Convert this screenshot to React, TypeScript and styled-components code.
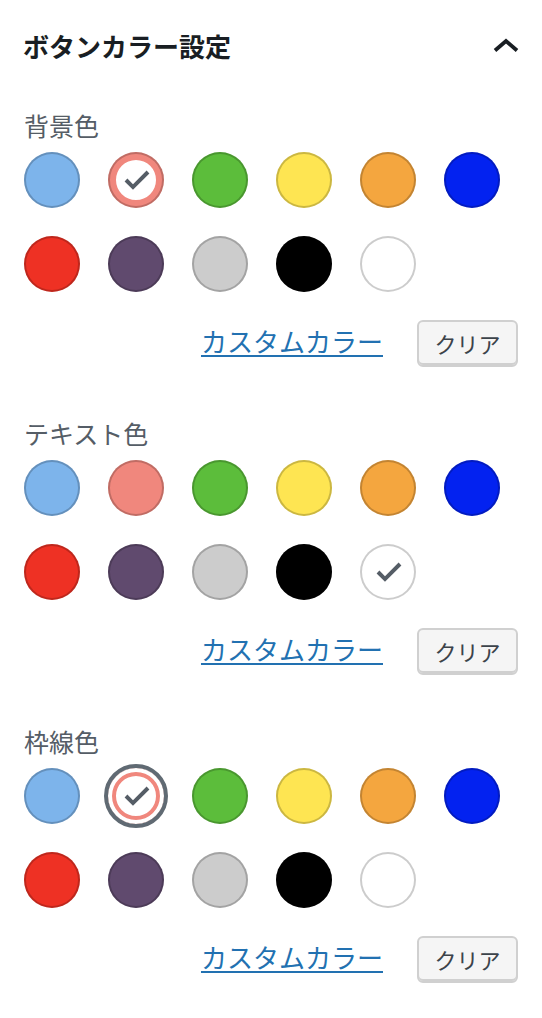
import React from "react";
import styled, { createGlobalStyle, css } from "styled-components";

const GlobalStyle = createGlobalStyle`
  html, body {
    margin: 0;
    padding: 0;
    background: #ffffff;
  }
  body {
    font-family: "Noto Sans CJK JP", "Noto Sans", sans-serif;
  }
`;

const Panel = styled.div`
  width: 542px;
  box-sizing: border-box;
  background: #fff;
  padding-bottom: 40px;
`;

const Header = styled.div`
  display: flex;
  align-items: center;
  justify-content: space-between;
  height: 92px;
  padding: 0 12px 0 23px;
`;

const Title = styled.h2`
  margin: 0;
  font-size: 26px;
  font-weight: 700;
  color: #191e23;
  line-height: 1;
`;

const Chevron = styled.svg`
  width: 48px;
  height: 48px;
  display: block;
`;

const Sections = styled.div`
  display: flex;
  flex-direction: column;
  gap: 49px;
  padding: 16px 24px 0 24px;
`;

const Section = styled.section`
  display: flex;
  flex-direction: column;
`;

const Label = styled.div`
  font-size: 25px;
  line-height: 34px;
  color: #555d66;
  margin-bottom: 10px;
`;

const Swatches = styled.div`
  display: flex;
  flex-wrap: wrap;
  gap: 28px;
`;

const Swatch = styled.button<{ $color: string; $selected?: boolean; $focused?: boolean }>`
  position: relative;
  width: 56px;
  height: 56px;
  padding: 0;
  border: none;
  border-radius: 50%;
  background: transparent;
  cursor: pointer;
  display: flex;
  align-items: center;
  justify-content: center;
  box-shadow: inset 0 0 0 ${(p) => (p.$selected ? "8px" : "28px")} ${(p) => p.$color};
  outline: none;

  &::before {
    content: "";
    position: absolute;
    inset: 0;
    border-radius: 50%;
    box-shadow: inset 0 0 0 2px rgba(0, 0, 0, 0.2);
  }

  ${(p) =>
    p.$focused &&
    css`
      &::after {
        content: "";
        position: absolute;
        top: -4px;
        left: -4px;
        width: 64px;
        height: 64px;
        box-sizing: border-box;
        border-radius: 50%;
        border: 4px solid #606a73;
        box-shadow: inset 0 0 0 4px #fff;
      }
    `}
`;

const Check = styled.svg`
  width: 40px;
  height: 40px;
  display: block;
  position: relative;
  z-index: 1;
`;

const Actions = styled.div`
  display: flex;
  justify-content: flex-end;
  align-items: center;
  gap: 34px;
  margin-top: 28px;
`;

const CustomLink = styled.a`
  font-size: 26px;
  line-height: 1.3;
  padding-bottom: 5px;
  color: #2271b1;
  text-decoration: underline;
  text-decoration-thickness: 2px;
  text-underline-offset: 3px;
  cursor: pointer;
`;

const ClearButton = styled.button`
  height: 47px;
  width: 101px;
  box-sizing: border-box;
  padding: 0 12px 2px;
  font-family: "Noto Sans CJK JP", "Noto Sans", sans-serif;
  font-size: 22px;
  color: #3c434a;
  background: #f5f5f5;
  border: 2px solid #d0d0d0;
  border-radius: 6px;
  box-shadow: inset 0 -2px 0 #d0d0d0;
  cursor: pointer;
`;

const COLORS = [
  "#7db4eb",
  "#f0877d",
  "#5cbd3b",
  "#fee552",
  "#f4a63f",
  "#0322f0",
  "#ee3124",
  "#604a6e",
  "#cccccc",
  "#000000",
  "#ffffff",
];

type SectionData = { label: string; selected: number; focused?: boolean };

const SECTIONS: SectionData[] = [
  { label: "背景色", selected: 1 },
  { label: "テキスト色", selected: 10 },
  { label: "枠線色", selected: 1, focused: true },
];

const CheckIcon = () => (
  <Check viewBox="0 0 20 20" aria-hidden>
    <path d="M15.3 5.3l-6.8 6.8-2.8-2.8-1.4 1.4 4.2 4.2 8.2-8.2z" fill="#555d66" />
  </Check>
);

export default function App() {
  return (
    <>
      <GlobalStyle />
      <Panel>
        <Header>
          <Title>ボタンカラー設定</Title>
          <Chevron viewBox="0 0 48 48" aria-hidden>
            <polyline
              points="13,28.5 24,19 35,28.5"
              fill="none"
              stroke="#191e23"
              strokeWidth="3.8"
              strokeLinecap="butt"
              strokeLinejoin="miter"
            />
          </Chevron>
        </Header>
        <Sections>
          {SECTIONS.map((s) => (
            <Section key={s.label}>
              <Label>{s.label}</Label>
              <Swatches>
                {COLORS.map((c, i) => (
                  <Swatch
                    key={c}
                    $color={c}
                    $selected={i === s.selected}
                    $focused={i === s.selected && s.focused}
                    aria-label={c}
                  >
                    {i === s.selected && <CheckIcon />}
                  </Swatch>
                ))}
              </Swatches>
              <Actions>
                <CustomLink>カスタムカラー</CustomLink>
                <ClearButton>クリア</ClearButton>
              </Actions>
            </Section>
          ))}
        </Sections>
      </Panel>
    </>
  );
}
